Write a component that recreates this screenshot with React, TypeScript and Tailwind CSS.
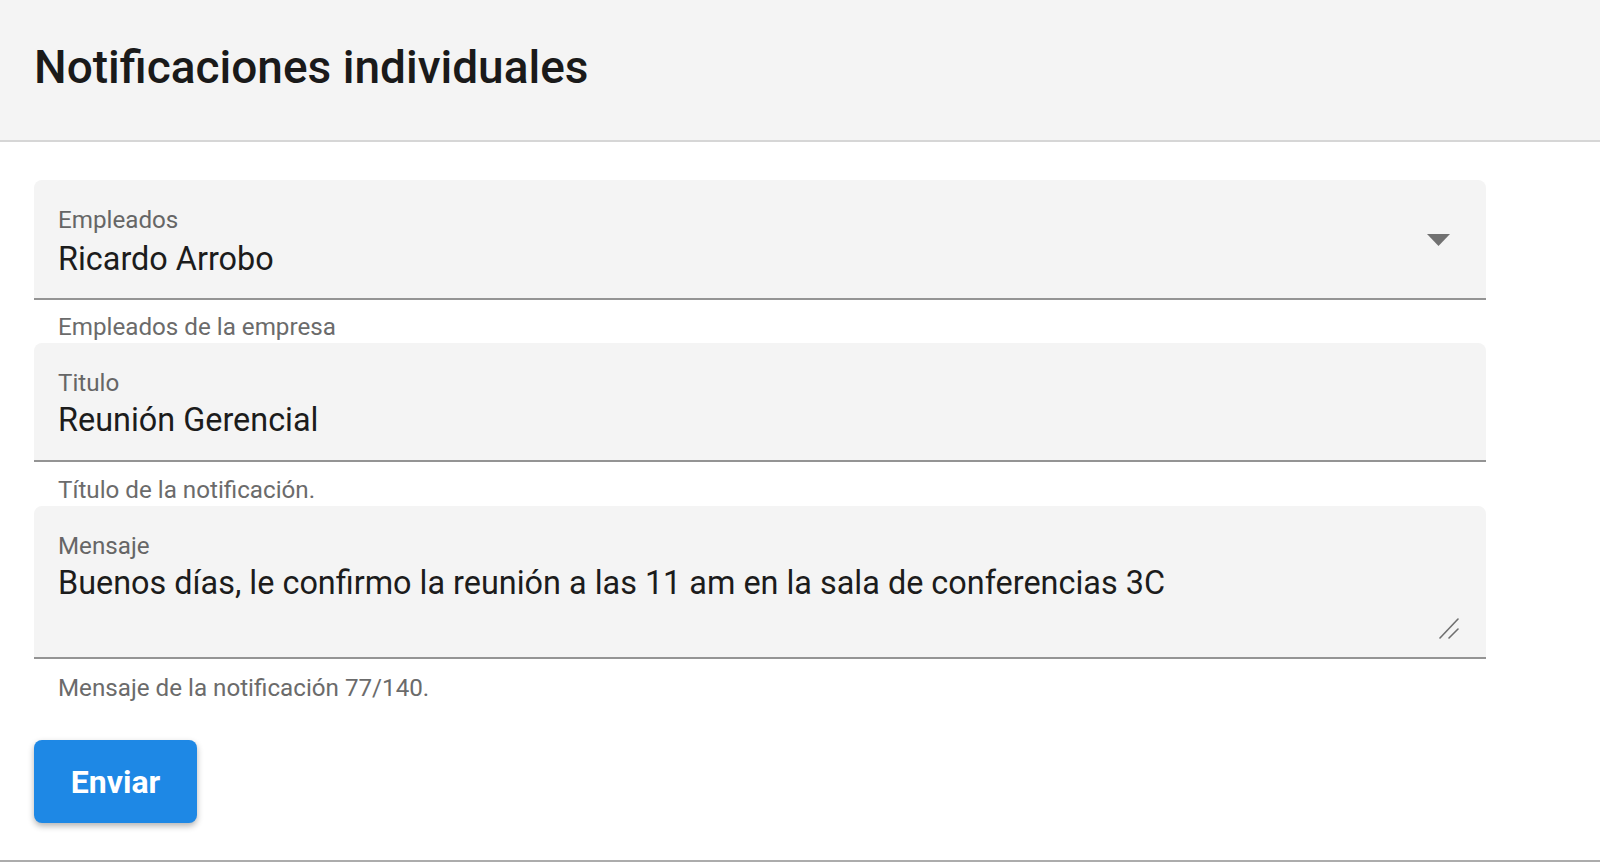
import React from 'react';

const FONT = { fontFamily: 'Roboto, "Noto Sans", sans-serif' };

type FieldProps = {
  label: string;
  value: string;
  hint: string;
  boxClass: string;
  hintClass: string;
  valueClass?: string;
  tall?: boolean;
  select?: boolean;
};

const Field: React.FC<FieldProps> = ({ label, value, hint, boxClass, hintClass, valueClass = 'mt-[1px]', tall, select }) => {
  return (
    <div className="w-[1452px]">
      <div className={`relative flex bg-[#f4f4f4] rounded-t-[8px] border-b-2 border-[#949494] ${boxClass}`}>
        <div className="flex-1 pl-[24px] pt-[24px]">
          <div className="text-[24.2px] leading-[32px] text-[#666666]">{label}</div>
          <div className={`text-[32.4px] leading-[40px] text-[#1c1c1c] ${valueClass}`}>{value}</div>
        </div>
        {select && (
          <div className="self-center pr-[36px] pt-[1px]">
            {/* menu-down triangle */}
            <svg width="23" height="12" viewBox="0 0 23 12">
              <path d="M0 0 L23 0 L11.5 12 Z" fill="#717171" />
            </svg>
          </div>
        )}
        {tall && (
          <svg
            className="absolute right-[27px] bottom-[18px]"
            width="20"
            height="21"
            viewBox="0 0 20 21"
          >
            <path d="M1 20 L19 1" stroke="#6f6f6f" strokeWidth="1.6" strokeLinecap="round" />
            <path d="M10 20 L19 11" stroke="#6f6f6f" strokeWidth="1.6" strokeLinecap="round" />
          </svg>
        )}
      </div>
      <div className={`pl-[24px] text-[24.2px] leading-[32px] text-[#6b6b6b] ${hintClass}`}>{hint}</div>
    </div>
  );
};

const App: React.FC = () => {
  return (
    <div className="w-[1600px] h-[863px] bg-white overflow-hidden" style={FONT}>
      <div className="h-[862px] border-b-2 border-[#acacac]">
        {/* Header */}
        <div className="h-[142px] bg-[#f4f4f4] border-b-2 border-[#d6d6d6] flex items-center pl-[34px]">
          <h1 className="text-[46px] font-medium text-[#1a1a1a] pb-[5px]">Notificaciones individuales</h1>
        </div>

        {/* Form */}
        <div className="pl-[34px] pt-[38px]">
          <Field
            label="Empleados"
            value="Ricardo Arrobo"
            hint="Empleados de la empresa"
            boxClass="h-[120px]"
            hintClass="h-[43px] pt-[11px]"
            valueClass="mt-[3px]"
            select
          />
          <Field
            label="Titulo"
            value="Reunión Gerencial"
            hint="Título de la notificación."
            boxClass="h-[119px]"
            hintClass="h-[44px] pt-[12px]"
          />
          <Field
            label="Mensaje"
            value="Buenos días, le confirmo la reunión a las 11 am en la sala de conferencias 3C"
            hint="Mensaje de la notificación 77/140."
            boxClass="h-[153px]"
            hintClass="h-[44px] pt-[13px]"
            tall
          />
          <button className="mt-[37px] w-[163px] h-[83px] rounded-[8px] bg-[#1e88e5] text-white text-[32px] font-bold shadow-[0_3px_6px_rgba(0,0,0,0.3)]">
            Enviar
          </button>
        </div>
      </div>
    </div>
  );
};

export default App;
